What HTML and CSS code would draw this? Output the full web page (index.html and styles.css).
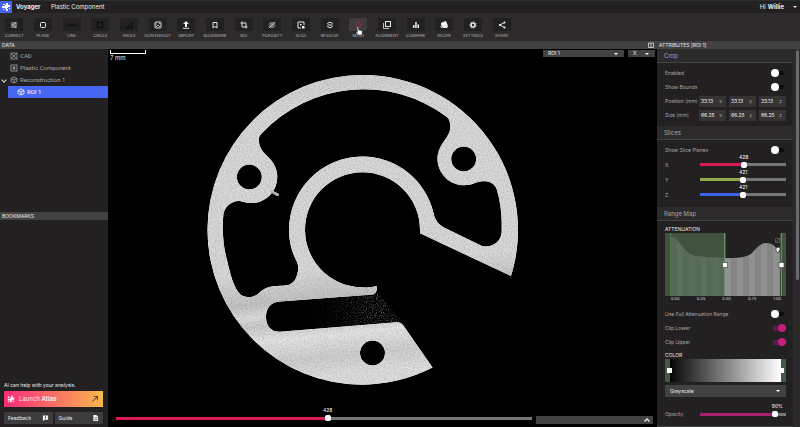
FILE: index.html
```html
<!DOCTYPE html>
<html lang="en">
<head>
<meta charset="utf-8">
<meta name="viewport" content="width=device-width, initial-scale=1">
<title>Voyager</title>
<link rel="stylesheet" href="styles.css">
</head>
<body>
<header class="topbar">
  <a class="logo" href="#" aria-label="Voyager home"><svg viewBox="0 0 12 12"><path fill="#fff" d="M6 2h2v2h2v2H8v1H7v1h1v2H6V8H5V7H2V5h3V4h1zM3 3h2v1H3zM3 8h1v1H3zM9 7h1v1H9z"/></svg></a>
  <strong class="brand">Voyager</strong>
  <span class="project">Plastic Component</span>
  <button class="user">Hi <b>Willie</b><i class="caret"></i></button>
</header>

<nav class="toolbar">
  <button class="tool"><span class="tile"><svg viewBox="0 0 12 12"><path stroke-width=".8" d="M3 4h6M3 6h6M3 8h6M7 3v2M5 5v2M7 7v2"/></svg></span>CORRECT</button>
  <button class="tool"><span class="tile"><svg viewBox="0 0 12 12"><rect x="3.500" y="3.500" width="5" height="5" rx="1"/></svg></span>PLANE</button>
  <button class="tool" disabled><span class="tile"><svg viewBox="0 0 12 12"><path d="M2.500 6h7M3 5v2M9 5v2"/></svg></span>LINE</button>
  <button class="tool" disabled><span class="tile"><svg viewBox="0 0 12 12"><circle cx="6" cy="6" r="3"/><path d="M3 3h1M8 3h1M3 9h1M8 9h1"/></svg></span>CIRCLE</button>
  <button class="tool" disabled><span class="tile"><svg viewBox="0 0 12 12"><path d="M3 9l6-6v6zM6 9V7"/></svg></span>ANGLE</button>
  <button class="tool"><span class="tile"><svg viewBox="0 0 12 12"><rect x="3" y="3" width="6" height="6" rx="1"/><path stroke-width=".8" d="M4 8l2-2 2 2M4 5h1M7 4.500h1"/></svg></span>SCREENSHOT</button>
  <button class="tool"><span class="tile"><svg viewBox="0 0 12 12"><path class="solid" d="M6 2l3 3H7v3H5V5H3z"/><path d="M3 9.300h6"/></svg></span>IMPORT</button>
  <button class="tool"><span class="tile"><svg viewBox="0 0 12 12"><path d="M4 3.500h4v5.500L6 7.500 4 9z"/></svg></span>BOOKMARK</button>
  <button class="tool"><span class="tile"><svg viewBox="0 0 12 12"><path d="M4 2.500V8h5.500M2.500 4H8v5.500"/></svg></span>ROI</button>
  <button class="tool"><span class="tile"><svg viewBox="0 0 12 12"><path stroke-width=".8" d="M3 5.500L5.500 3M3 9l6-6M6.500 9L9 6.500M3 7.500L7.500 3M4.500 9L9 4.500"/></svg></span>POROSITY</button>
  <button class="tool"><span class="tile"><svg viewBox="0 0 12 12"><path d="M9 6V3H3v6h3"/><path class="solid" d="M7 7h2.500v2.500H7zM5 5h1.500v1.500H5z"/></svg></span>SLICE</button>
  <button class="tool"><span class="tile"><svg viewBox="0 0 12 12"><path d="M3.300 5a3 3 0 0 1 5.400 0M8.700 7a3 3 0 0 1-5.400 0M3.500 6h5"/></svg></span>REVOLVE</button>
  <button class="tool active"><span class="tile"><svg viewBox="0 0 12 12"><path stroke-dasharray="2 .5" d="M4.500 3.300h3L9.300 6 7.500 8.700h-3L2.700 6z"/></svg></span>MESH
    <svg class="pointer" viewBox="0 0 8 10"><path d="M2 1q1-1 1.400.2L3.700 4l3 .7q.8.4.6 1.300L7 9H3L1 6.500q0-1 1-.5l.5.400z" fill="#fff" stroke="#222" stroke-width=".5"/></svg></button>
  <button class="tool"><span class="tile"><svg viewBox="0 0 12 12"><rect x="4.500" y="2.500" width="5" height="5"/><path stroke-width=".8" d="M2.500 4v5.500H8"/></svg></span>ALIGNMENT</button>
  <button class="tool"><span class="tile"><svg viewBox="0 0 12 12"><path class="solid" d="M3 6h1.500v3H3zM5.200 3h1.500v6H5.200zM7.500 5.500H9V9H7.500z"/></svg></span>COMPARE</button>
  <button class="tool"><span class="tile"><svg viewBox="0 0 12 12"><path class="solid" d="M5 3l3-1 2 5-1 2H5L3 6V4z"/><path d="M2.500 7l1.500 2"/></svg></span>RECIPE</button>
  <button class="tool"><span class="tile"><svg viewBox="0 0 12 12"><circle cx="6" cy="6" r="2" stroke-width="1.600"/><path stroke-dasharray="1.200 1.600" d="M6 2.800a3.200 3.200 0 1 1 0 6.400 3.200 3.200 0 1 1 0-6.400"/></svg></span>SETTINGS</button>
  <button class="tool"><span class="tile"><svg viewBox="0 0 12 12"><path d="M8.500 3.500L3.800 6l4.700 2.500"/><g class="solid"><circle cx="8.500" cy="3.500" r="1"/><circle cx="3.800" cy="6" r="1"/><circle cx="8.500" cy="8.500" r="1"/></g></svg></span>SHARE</button>
</nav>

<main class="workspace">
  <aside class="sidebar">
    <h2 class="bar">DATA</h2>
    <ul class="tree">
      <li><svg viewBox="0 0 8 8"><rect x="1" y="1" width="6" height="6"/><path d="M2 2l4 4M6 2L2 6"/></svg>CAD</li>
      <li><svg viewBox="0 0 8 8"><rect x="1" y="1" width="6" height="6"/><path d="M4 2v4M2.500 3l3 2M5.500 3l-3 2"/></svg>Plastic Component</li>
      <li class="open"><svg viewBox="0 0 8 8"><path d="M4 1l3 1.500v3L4 7 1 5.500v-3zM1 2.500L4 4l3-1.500M4 4v3"/></svg>Reconstruction 1</li>
      <li class="selected"><svg viewBox="0 0 8 8"><path d="M4 1l3 1.500v3L4 7 1 5.500v-3zM1 2.500L4 4l3-1.500M4 4v3"/></svg>ROI 1</li>
    </ul>
    <h2 class="bar">BOOKMARKS</h2>
    <div class="help">
      <p>AI can help with your analysis.</p>
      <button class="launch"><svg viewBox="0 0 10 10"><path fill="#fff" d="M5 1h2v2h2v3H7v1H6v2H4V7H1V5h3V3h1zM1 2h2v2H1zM1 8h2v1H1zM8 7h1v2H8z"/></svg><span>Launch <b>Atlas</b></span><svg class="go" viewBox="0 0 10 10"><path fill="none" stroke="#222" d="M2 8l6-6M3.500 2H8v4.500"/></svg></button>
      <div class="links">
        <button>Feedback<svg viewBox="0 0 8 8"><path fill="#eee" d="M1 1h6v5H3L1 7.500z"/><path stroke="#444" d="M4 2v2M4 4.500v.8"/></svg></button>
        <button>Guide<svg viewBox="0 0 8 8"><path fill="#eee" d="M1.500.5H5l2 2v5H1.500z"/><path stroke="#444" stroke-width=".7" d="M3 4h3M3 5.700h3"/></svg></button>
      </div>
    </div>
  </aside>

  <section class="viewer">
    <div class="bar"><svg class="split" viewBox="0 0 8 8"><path d="M1.500 2h5v4.500h-5zM4 2v4.500" fill="none" stroke="#ddd" stroke-width=".8"/></svg></div>
    <div class="viewtop">
      <div class="scale"><i></i>7 mm</div>
      <span class="drop volume"><select aria-label="Volume"><option>ROI 1</option></select></span>
      <span class="drop axis"><select aria-label="Axis"><option>X</option></select></span>
    </div>
    <svg class="scan" viewBox="108 64 549 341" role="img" aria-label="Slice of the part">
      <defs>
        <filter id="grain" x="0" y="0" width="100%" height="100%" color-interpolation-filters="sRGB">
          <feTurbulence type="fractalNoise" baseFrequency=".7" numOctaves="2" seed="4"/>
          <feColorMatrix values=".28 0 0 0 .82  .28 0 0 0 .82  .28 0 0 0 .82  0 0 0 0 1"/>
          <feComposite in2="SourceGraphic" operator="in" result="n"/>
          <feBlend in="n" in2="SourceGraphic" mode="multiply"/>
        </filter>
        <filter id="speckle" x="0" y="0" width="100%" height="100%" color-interpolation-filters="sRGB">
          <feTurbulence type="fractalNoise" baseFrequency=".8" numOctaves="2" seed="9"/>
          <feColorMatrix values="0 0 0 0 .6  0 0 0 0 .6  0 0 0 0 .6  3 0 0 0 -1.400"/>
          <feComposite in2="SourceGraphic" operator="in"/>
        </filter>
        <linearGradient id="haze"><stop offset="0" stop-color="#fff" stop-opacity="0"/><stop offset=".3" stop-color="#fff" stop-opacity=".15"/><stop offset=".7" stop-color="#fff" stop-opacity=".6"/><stop offset="1" stop-color="#fff" stop-opacity=".5"/></linearGradient>
        <linearGradient id="shade" x1="0" y1="0" x2=".1" y2="1"><stop offset="0" stop-color="#cfcfcf"/><stop offset=".15" stop-color="#dadada"/><stop offset=".66" stop-color="#dadada"/><stop offset=".75" stop-color="#c4c4c4"/><stop offset=".79" stop-color="#dedede"/><stop offset=".82" stop-color="#cbcbcb"/><stop offset=".87" stop-color="#e6e6e6"/><stop offset=".94" stop-color="#d0d0d0"/><stop offset="1" stop-color="#e0e0e0"/></linearGradient>
      </defs>
      <g filter="url(#grain)">
        <path fill="url(#shade)" fill-rule="evenodd" d="M511 276A155 155 0 0 0 362.500 75A155 155 0 0 0 207.500 230A155 155 0 0 0 362.500 384.700Q400 384 432.500 367.500L403 325Q401 322 397 322.300L280 331.700C271 332 266 326 266 317C266 308 271 302 280 301.500L373 294.500Q377.500 293 377 286Q370 288 362 287.200A57.500 57.500 0 1 1 420 229V233.300ZM262 133A139.500 139.500 0 0 1 447 117C451 120 451.500 130 448 135C446 139 443 142 441 146C434 158 438 172 448 180C458 187 467 186 475 183C483 180 494 180 497 190Q501.500 206 501.700 222V232C501 243 491 248 482 246L447 229C438 225 435 220 433.500 213A73.500 73.500 0 0 0 362 156.500A73.500 73.500 0 0 0 289 230C289 242 292 252 296 260C300 267 298 274 295 280C289 287 286 285 277 286C267 286 262 290 258 294C252 298 247 298 241 295C233 288 230 272 227 260C223 246 222 230 223.300 215C224 207 232 200 240 201C244 202 248 203 252 203A26 26 0 0 0 269 158C263 152 259 148 259 141C258.500 138 259 136 262 133ZM236.800 177a12.500 12.500 0 1 0 25 0a12.500 12.500 0 1 0-25 0M451.200 159a12.500 12.500 0 1 0 25 0a12.500 12.500 0 1 0-25 0M360 353a12.500 12.500 0 1 0 25 0a12.500 12.500 0 1 0-25 0"/>
        <path fill="#bbb" d="M271 190l8 4v1.500h-3l-6-4z"/>
      </g>
      <g filter="url(#speckle)"><path fill="url(#haze)" d="M305 301L378 293L402 322L305 330Z"/></g>
    </svg>
    <div class="viewfoot">
      <span class="slider main" style="--v:50.900%"><output>428</output><input type="range" aria-label="Slice" max="841" value="428"></span>
      <button class="drawer" aria-label="Open drawer"><svg viewBox="0 0 8 6"><path d="M1.500 4.500L4 2l2.500 2.500" fill="none" stroke="#eee" stroke-width="1.300"/></svg></button>
    </div>
  </section>

  <aside class="attributes">
    <h2 class="bar">ATTRIBUTES [ROI 1]</h2>
    <div class="panel">
      <div class="sections">
        <h3>Crop</h3>
        <div class="body">
          <label class="row">Enabled<input class="switch" type="checkbox"></label>
          <label class="row">Show Bounds<input class="switch" type="checkbox"></label>
          <div class="row"><span>Position (mm)</span><div class="fields"><label><input value="33.13">x</label><label><input value="33.13">y</label><label><input value="33.13">z</label></div></div>
          <div class="row"><span>Size (mm)</span><div class="fields"><label><input value="66.25">x</label><label><input value="66.25">y</label><label><input value="66.25">z</label></div></div>
        </div>
        <h3>Slices</h3>
        <div class="body slices">
          <label class="row">Show Slice Planes<input class="switch" type="checkbox"></label>
          <label class="row">X<span class="slider red" style="--v:50.900%"><output>428</output><input type="range" max="841" value="428"></span></label>
          <label class="row">Y<span class="slider green" style="--v:50.100%"><output>421</output><input type="range" max="841" value="421"></span></label>
          <label class="row">Z<span class="slider blue" style="--v:50.100%"><output>421</output><input type="range" max="841" value="421"></span></label>
        </div>
        <h3>Range Map</h3>
        <div class="body range">
          <h4>ATTENUATION</h4>
          <svg class="histogram" viewBox="0 0 121 63" preserveAspectRatio="none">
            <defs><pattern id="bars" width="12" height="63" patternUnits="userSpaceOnUse"><path fill="#929192" d="M0 0h12v63H0z"/><path fill="#868586" d="M6 0h6v63H6z"/></pattern></defs>
            <path fill="#41533f" d="M0 0h61v63H0zM115 0h6v63h-6z"/>
            <path fill="url(#bars)" d="M5 4C15 4 17 20 30 23Q45 25 60 25C72 25 83 25 88 19C94 12 97 10 102 10C108 10 111 15 115 19V63H5z"/>
            <path fill="#35583b" fill-opacity=".6" d="M5 4C15 4 17 20 30 23Q45 25 60 25V63H5z"/>
            <path stroke="#698d69" d="M59.500 0v63M116.500 0v63"/><path stroke="#587558" d="M5.500 0v63"/>
            <path fill="none" stroke="#555" d="M110.500 5.500h4v4h-4zM110.500 9.500l4-4"/><path fill="#eee" stroke="#222" stroke-width=".6" d="M111 15l2-1 2 1v2l-1 1-1 2-2-2z"/>
            <path fill="#fff" stroke="#333" stroke-width=".6" d="M57.500 29.500h5v5h-5zM114 29.500h5v5h-5z"/>
          </svg>
          <div class="ticks"><span>0.00</span><span>0.25</span><span>0.50</span><span>0.75</span><span>1.00</span></div>
          <label class="row">Use Full Attenuation Range<input class="switch" type="checkbox"></label>
          <label class="row">Clip Lower<input class="switch" type="checkbox" checked></label>
          <label class="row">Clip Upper<input class="switch" type="checkbox" checked></label>
          <h4 class="color">COLOR</h4>
          <div class="ramp"><i></i><i></i></div>
          <span class="drop map"><select aria-label="Colour map"><option>Grayscale</option></select></span>
          <label class="row opacity">Opacity<span class="slider pink" style="--v:90%"><output>90%</output><input type="range" value="90"></span></label>
        </div>
        <div class="end"></div>
      </div>
      <div class="scrollbar"><i></i></div>
    </div>
  </aside>
</main>
</body>
</html>
```
FILE: styles.css
```css
* { box-sizing: border-box; }
body { margin: 0; height: 100vh; overflow: hidden; display: flex; flex-direction: column; background: #222021; color: #a9a8a9; font: 6px/8px Inter, "Liberation Sans", sans-serif; }
button, input, select { font: inherit; color: inherit; border: 0; padding: 0; margin: 0; background: none; }
h2, h3, h4, p, ul { margin: 0; padding: 0; font: inherit; list-style: none; }
svg { display: block; }

.topbar { display: flex; align-items: center; flex: none; height: 13px; border-top: 1px solid #2b3032; color: #eee; }
.logo { width: 12px; height: 12px; background: #4766f2; margin-right: 4px; }
.brand { width: 35px; }
.user { margin-left: auto; display: flex; align-items: center; gap: 2px; padding-right: 3px; }
.caret { border: 2px solid transparent; border-top: 2px solid #eee; border-bottom: 0; margin-left: 7px; }

.toolbar { flex: none; height: 28px; background: #2c2a2b; display: grid; grid-template-columns: repeat(18, minmax(0, 29px)); }
.tool { position: relative; display: flex; flex-direction: column; align-items: center; padding-top: 5px; gap: 1px; font-size: 4px; line-height: 8px; white-space: nowrap; color: #b5b4b5; }
.tile { width: 18px; height: 13px; background: #222021; display: flex; align-items: center; justify-content: center; }
.tile svg { width: 12px; height: 12px; fill: none; stroke: #e6e6e6; }
.tile .solid { fill: #f2f2f2; stroke: none; }
.tool:disabled .tile svg { stroke: #080808; }
.active .tile { background: #3e3c3d; }
.active .tile svg { stroke: #b31d5c; }
.pointer { position: absolute; width: 8px; height: 10px; left: 11px; top: 13px; }
.toolbar { grid-template-columns: repeat(18, 1fr); padding-right: 35.500%; }

.workspace { flex: 1; min-height: 0; display: grid; grid-template-columns: 108px 1fr 143px; }
.bar { flex: none; height: 8px; background: #434243; color: #e8e8e8; font-size: 5px; padding-left: 2px; }

.sidebar { display: flex; flex-direction: column; min-height: 0; }
.tree { height: 163px; font-family: Roboto, sans-serif; }
.tree li { display: flex; align-items: center; gap: 2px; height: 12px; margin-left: 8px; padding-left: 2px; position: relative; }
.tree li:first-child { margin-top: 1px; }
.tree svg { width: 8px; height: 8px; fill: none; stroke: currentColor; stroke-width: .8; }
.tree .open::before { content: ""; position: absolute; left: -6px; top: 4px; width: 3px; height: 3px; border: solid #ddd; border-width: 0 1px 1px 0; transform: rotate(45deg); }
.tree .selected { background: #4766f2; color: #fff; padding-left: 9px; }
.help { flex: 1; display: flex; flex-direction: column; justify-content: flex-end; padding: 0 5px 3px 4px; color: #eee; }
.help p { font-size: 5px; margin-bottom: 2px; }
.launch { display: flex; align-items: center; gap: 4px; height: 16px; padding: 0 4px 0 3px; background: linear-gradient(90deg, #f92b78, #fa7c60 60%, #f8b84b); }
.launch svg { width: 8px; height: 8px; }
.launch .go { margin-left: auto; }
.links { display: grid; grid-template-columns: 1fr 1fr; gap: 2px; margin-top: 5px; }
.links button { display: flex; align-items: center; justify-content: space-between; height: 12px; padding: 0 4px; background: #3d3b3c; font-size: 5px; }
.links svg { width: 7px; height: 8px; fill: none; }

.viewer { display: flex; flex-direction: column; min-width: 0; min-height: 0; background: #000; }
.split { width: 8px; height: 8px; margin-left: auto; margin-right: 2px; }
.viewtop { display: flex; align-items: flex-start; height: 15px; padding: 1px 2px 0; gap: 4px; }
.scale { color: #eee; margin-right: auto; }
.scale i { display: block; width: 36px; height: 4px; border: 1px solid #fff; border-top: 0; }
.drop { position: relative; display: block; height: 7px; background: #434243; color: #eee; font-size: 5px; line-height: 7px; }
.drop select { appearance: none; width: 100%; height: 100%; padding-left: 5px; display: block; }
.drop::after { content: ""; position: absolute; right: 6px; top: 3px; border: 2px solid transparent; border-top-color: #fff; border-bottom: 0; pointer-events: none; }
.volume { width: 81px; }
.axis { width: 27px; }
.scan { flex: 1; min-height: 0; width: 100%; }
.viewfoot { display: flex; align-items: center; height: 22px; padding: 4px 4px 0 8px; gap: 4px; }
.viewfoot .main { flex: 1; }
.drawer { width: 117px; height: 8px; margin-top: 3px; background: #434243; display: flex; justify-content: flex-end; align-items: center; padding-right: 2px; }
.drawer svg { width: 8px; height: 6px; }

.slider { --c: #d81b51; position: relative; display: block; height: 6px; }
.slider input { appearance: none; display: block; width: 100%; height: 6px; background: linear-gradient(90deg, var(--c) var(--v), #777677 var(--v)) center / 100% 3px no-repeat; }
.slider input::-webkit-slider-thumb { appearance: none; width: 6px; height: 6px; border-radius: 2px; background: #fff; }
.slider output { position: absolute; left: var(--v); top: -9px; transform: translateX(-50%); color: #fff; font-size: 5px; }
.row .slider { width: 86px; }
.green { --c: #8eaa4a; }
.blue { --c: #3f62ec; }
.pink { --c: #a9206c; }

.attributes { display: flex; flex-direction: column; min-height: 0; }
.panel { flex: 1; min-height: 0; display: flex; overflow: hidden; }
.sections { flex: 1; }
h3 { height: 14px; padding: 0 7px; line-height: 13px; background: #2c2a2b; border-bottom: 1px solid #444344; font-size: 6px; }
.body { padding: 3px 7px 4px 8px; font-size: 5px; }
.row { display: flex; justify-content: space-between; align-items: center; height: 14px; white-space: nowrap; }
.slices { padding-bottom: 5px; }
.slices .row + .row { height: 15px; }
.fields { display: flex; gap: 3px; }
.fields label { width: 27px; height: 11px; display: flex; align-items: center; justify-content: space-between; padding: 0 4px 0 2px; background: #353334; font-size: 5px; }
.fields input { width: 17px; height: 8px; color: #eee; }
.switch { appearance: none; width: 15px; height: 8px; display: flex; background: linear-gradient(#0d0d0d, #0d0d0d) 3px 2px / 10px 4px no-repeat; }
.switch::before { content: ""; width: 8px; height: 8px; border-radius: 50%; background: #fff; }
.switch:checked { justify-content: flex-end; background: linear-gradient(#5c1c43, #5c1c43) 2px 2px / 10px 5px no-repeat; }
.switch:checked::before { background: #c11f7c; }
h4 { font-size: 5px; line-height: 8px; color: #e8e8e8; }
.histogram { width: 100%; height: 63px; }
.ticks { display: flex; justify-content: space-between; padding: 0 5px 0 6px; font-size: 4px; line-height: 6px; height: 11px; color: #ddd; }
.color { margin-top: 2px; }
.ramp { height: 23px; display: flex; justify-content: space-between; align-items: center; padding: 0 2px; background: linear-gradient(90deg, #445a45 5px, #000 5px, #111 10px, #fff calc(100% - 5px), #445a45 calc(100% - 5px)); }
.ramp i { width: 5px; height: 5px; background: #fff; }
.map { height: 12px; margin-top: 3px; line-height: 12px; }
.map::after { top: 5px; }
.opacity { height: 29px; padding-top: 5px; }
.range { padding: 4px 7px 0 8px; }
.end { height: 14px; background: #2c2a2b; border-top: 1px solid #444344; }
.scrollbar { width: 7px; padding: 1px 1px 0 3px; background: #2c2a2b; }
.scrollbar i { display: block; height: 230px; border-radius: 2px; background: #6b6a6b; }
```
